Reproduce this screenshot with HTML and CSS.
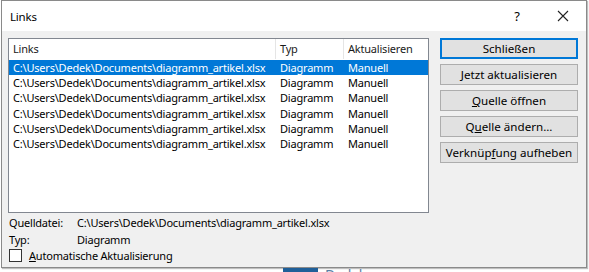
FILE: index.html
```html
<!DOCTYPE html>
<html lang="de">
<head>
    <meta charset="UTF-8">
    <title>Links</title>
    <link rel="stylesheet" href="styles.css">
</head>
<body>
    <div class="dialog">
        <div class="titlebar">
            <span class="title">Links</span>
            <span class="help">?</span>
            <span class="close">
                <svg width="12" height="12" viewBox="0 0 12 12"><path d="M1 1 L11 11 M11 1 L1 11" stroke="#222" stroke-width="1.1"/></svg>
            </span>
        </div>
        <div class="content">
            <div class="main">
                <div class="listview">
                    <div class="row head">
                        <span class="c1">Links</span>
                        <span class="c2">Typ</span>
                        <span class="c3">Aktualisieren</span>
                    </div>
                    <div class="row selected">
                        <span class="c1">C:\Users\Dedek\Documents\diagramm_artikel.xlsx</span>
                        <span class="c2">Diagramm</span>
                        <span class="c3">Manuell</span>
                    </div>
                    <div class="row">
                        <span class="c1">C:\Users\Dedek\Documents\diagramm_artikel.xlsx</span>
                        <span class="c2">Diagramm</span>
                        <span class="c3">Manuell</span>
                    </div>
                    <div class="row">
                        <span class="c1">C:\Users\Dedek\Documents\diagramm_artikel.xlsx</span>
                        <span class="c2">Diagramm</span>
                        <span class="c3">Manuell</span>
                    </div>
                    <div class="row">
                        <span class="c1">C:\Users\Dedek\Documents\diagramm_artikel.xlsx</span>
                        <span class="c2">Diagramm</span>
                        <span class="c3">Manuell</span>
                    </div>
                    <div class="row">
                        <span class="c1">C:\Users\Dedek\Documents\diagramm_artikel.xlsx</span>
                        <span class="c2">Diagramm</span>
                        <span class="c3">Manuell</span>
                    </div>
                    <div class="row">
                        <span class="c1">C:\Users\Dedek\Documents\diagramm_artikel.xlsx</span>
                        <span class="c2">Diagramm</span>
                        <span class="c3">Manuell</span>
                    </div>
                </div>
                <div class="info">
                    <div class="info-row"><span class="label">Quelldatei:</span><span>C:\Users\Dedek\Documents\diagramm_artikel.xlsx</span></div>
                    <div class="info-row"><span class="label">Typ:</span><span>Diagramm</span></div>
                    <label class="check"><span class="box"></span><span><u>A</u>utomatische Aktualisierung</span></label>
                </div>
            </div>
            <div class="buttons">
                <button class="btn default">Schließen</button>
                <button class="btn"><u>J</u>etzt aktualisieren</button>
                <button class="btn"><u>Q</u>uelle öffnen</button>
                <button class="btn">Q<u>u</u>elle ändern...</button>
                <button class="btn">Verknüp<u>f</u>ung aufheben</button>
            </div>
        </div>
    </div>
    <div class="behind">
        <span class="logo"></span>
        <span class="name">Dedek</span>
    </div>
</body>
</html>
```

FILE: styles.css
```css
body {
    margin: 0;
    background-color: #ffffff;
    font-family: "Noto Sans", "Open Sans", sans-serif;
    font-size: 11px;
    letter-spacing: -0.2px;
    color: #000;
    overflow: hidden;
}
.dialog {
    width: 584px;
    height: 266px;
    margin-left: 1px;
    border: 1px solid #8a8a8a;
    background-color: #f0f0f0;
    box-shadow: 1px 1px 1px rgba(0, 0, 0, 0.25);
}
.titlebar {
    height: 30px;
    background-color: #ffffff;
    display: flex;
    align-items: center;
}
.title {
    flex: 1;
    padding-left: 8px;
    font-size: 11.5px;
}
.help {
    width: 46px;
    text-align: center;
    font-size: 13px;
}
.close {
    width: 46px;
    display: flex;
    justify-content: center;
}
.content {
    display: flex;
    padding: 7px 0 0 6px;
}
.main {
    width: 421px;
}
.listview {
    height: 173px;
    border: 1px solid #828790;
    background-color: #fff;
}
.row {
    display: flex;
    height: 15.2px;
    line-height: 15px;
    white-space: nowrap;
}
.row span {
    padding-left: 4px;
    box-sizing: border-box;
    overflow: hidden;
}
.c1 {
    width: 267px;
}
.c2 {
    width: 68px;
}
.c3 {
    flex: 1;
}
.head {
    height: 20px;
    line-height: 20px;
    margin-bottom: 1px;
    color: #1a1a1a;
}
.head .c1,
.head .c2 {
    border-right: 1px solid #e5e5e5;
}
.selected {
    background-color: #0078d7;
    color: #fff;
}
.info {
    padding: 1px 0 0 1px;
}
.info-row {
    display: flex;
    height: 17px;
    line-height: 17px;
}
.label {
    width: 68px;
}
.check {
    display: flex;
    align-items: center;
    height: 16px;
    margin-top: -1px;
}
.box {
    width: 11px;
    height: 11px;
    border: 1px solid #333;
    background-color: #fff;
    margin-right: 7px;
}
.buttons {
    display: flex;
    flex-direction: column;
    gap: 5px;
    margin-left: 11px;
}
.btn {
    width: 138px;
    height: 21px;
    padding: 0;
    border: 1px solid #adadad;
    background-color: #e1e1e1;
    font-family: inherit;
    font-size: 11.6px;
    letter-spacing: 0;
    color: #000;
}
.btn.default {
    border: 2px solid #0078d7;
}
.behind {
    display: flex;
    align-items: flex-start;
    height: 4px;
    padding-left: 283px;
    overflow: hidden;
}
.logo {
    width: 35px;
    height: 4px;
    background-color: #1f5f99;
}
.name {
    margin-left: 7px;
    line-height: 14px;
    font-size: 14px;
    color: #5a7fa5;
}
```
